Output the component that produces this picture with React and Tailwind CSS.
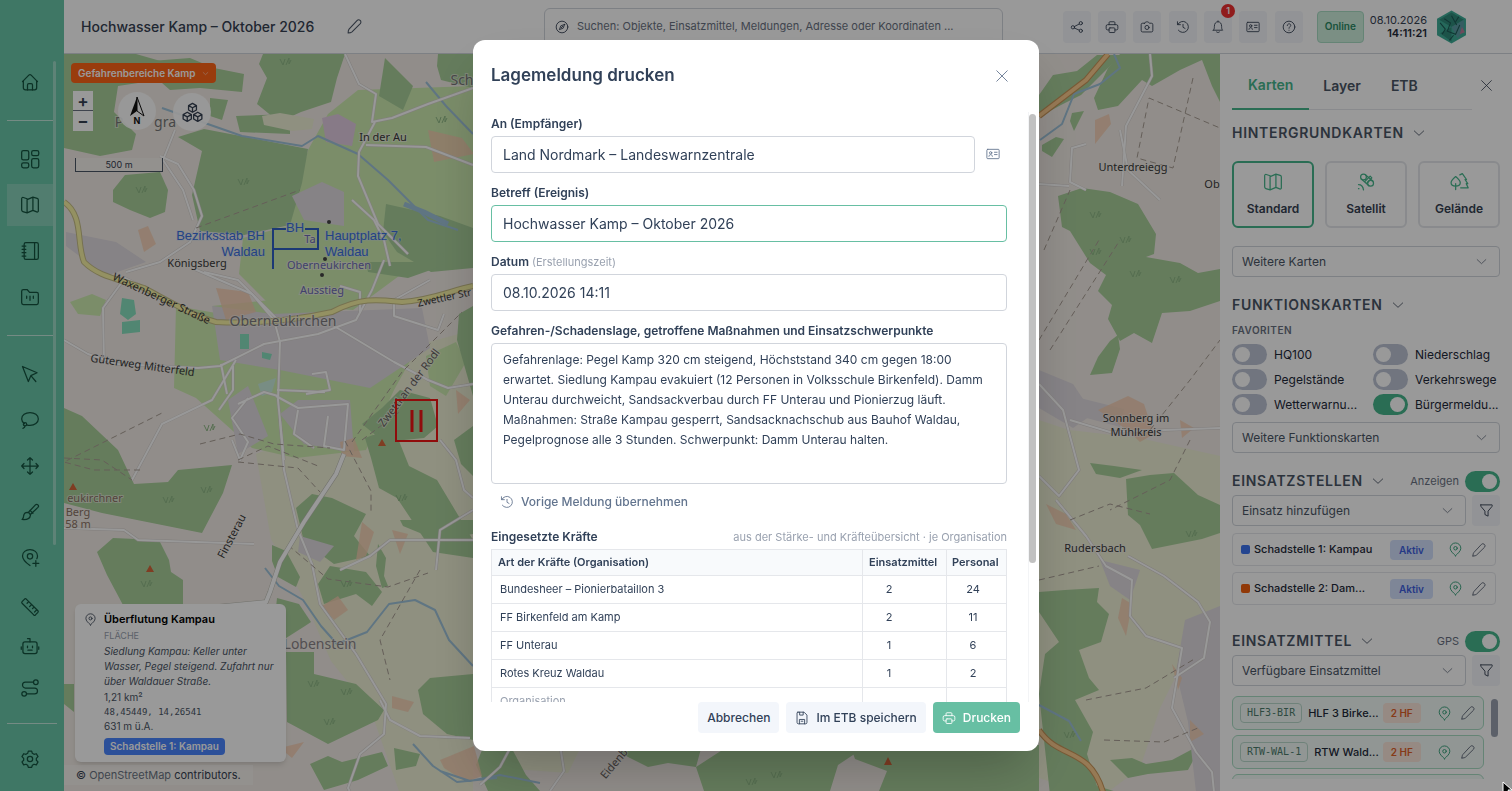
import { useState } from 'react';

const stroke = { fill: 'none', stroke: 'currentColor', strokeWidth: 1.5, strokeLinecap: 'round', strokeLinejoin: 'round' };

// 24er Raster, alle Icons sind reine Linien
const icons = {
  home: <><path d="M3 11.5 10.6 3.8a2 2 0 0 1 2.8 0L21 11.5" /><path d="M4 10.6V19a2.5 2.5 0 0 0 2.5 2.5h11A2.5 2.5 0 0 0 20 19v-8.4" /><path d="M9 21.5v-6A1.5 1.5 0 0 1 10.5 14h3a1.5 1.5 0 0 1 1.5 1.5v6" /></>,
  dashboard: <><rect x="2" y="2" width="8.5" height="11" rx="2" /><rect x="14" y="2" width="8.5" height="6" rx="2" /><rect x="2" y="16.5" width="8.5" height="6" rx="2" /><rect x="14" y="11.5" width="8.5" height="11" rx="2" /></>,
  map: <path d="M8.5 4.5 4 3c-1.2-.4-2 .3-2 1.5V18c0 1 .5 1.6 1.4 1.9l5.1 1.6 7-3 4.5 1.8c1.2.4 2-.3 2-1.500V6c0-1-.5-1.600-1.400-1.900l-5.100-1.600-7 3ZM8.500 4.800v16.400M15.500 2.800v15.500" />,
  notebook: <><rect x="5" y="2" width="17" height="20" rx="2" /><path d="M17.5 2v20M2.5 6H7M2.5 10H7M2.5 14H7M2.5 18H7" /></>,
  folder: <><path d="M2 19V5a2 2 0 0 1 2-2h4.5l3 3.500H20a2 2 0 0 1 2 2V19a2 2 0 0 1-2 2H4a2 2 0 0 1-2-2Z" /><path d="M8 11v2.500M12 11v5M16 11v2.500" /></>,
  cursor: <path d="m3 3 7 18 3-7 7.500-3.500L3 3Zm10 11 6 7" />,
  lasso: <><path d="M5.500 16.500C3.300 15 2 13 2 10.700 2 6.200 6.500 3 12 3s10 3.200 10 7.700-4.500 7.800-10 7.800c-1.500 0-2.900-.2-4.100-.7" /><circle cx="6" cy="17" r="2" /><path d="M6 19c0 1.500-.8 2.500-2.500 3" /></>,
  move: <path d="M12 2v20M2 12h20M9 4.800 12 2l3 2.800M9 19.200l3 2.800 3-2.800M4.800 9 2 12l2.800 3M19.200 9l2.800 3-2.800 3" />,
  brush: <><path d="M10 12.500 18.500 3.500a2 2 0 0 1 3 3L12.500 15" /><path d="M9 12.500c2 .3 3.400 1.600 3.500 3.500-.5 4-4.500 5.500-10 5 1.500-1 1.500-2 1.800-4 .3-2.500 2-4.500 4.700-4.500ZM12 10l3.500 3.500" /></>,
  pinPlus: <><path d="M12 21c-5-3.500-9-7-9-11.500C3 5 7 2 12 2s9 3 9 7.500c0 1.200-.3 2.300-.8 3.400" /><circle cx="12" cy="10" r="3.200" /><path d="M19 15v7M15.500 18.500h7" /></>,
  ruler: <path d="M7.500 2.500 21.500 16.500a1.500 1.500 0 0 1 0 2l-3 3a1.500 1.500 0 0 1-2 0L2.500 7.500a1.500 1.500 0 0 1 0-2l3-3a1.500 1.500 0 0 1 2 0ZM10.500 5.500 8.500 7.500M14 9l-2.500 2.500M17 12l-2 2M20 15.500l-2.500 2.500" />,
  bot: <><rect x="3.500" y="7" width="17" height="14" rx="2.500" /><path d="M12 7V3H9M1.500 13v3M22.500 13v3M9 12v2M15 12v2M9.500 17h5" /></>,
  route: <><circle cx="5" cy="19" r="2.800" /><circle cx="19" cy="5" r="2.800" /><path d="M16 5H6.500a3.500 3.500 0 0 0 0 7h11a3.500 3.500 0 0 1 0 7H8" /></>,
  gear: <><path d="m10 2.500-.8 2.700-2 1.200-2.800-.7-2 3.500 2 2v2.300l-2 2 2 3.500 2.800-.7 2 1.200.8 2.500h4l.8-2.500 2-1.200 2.800.7 2-3.500-2-2v-2.300l2-2-2-3.500-2.800.7-2-1.200-.8-2.700h-4Z" /><circle cx="12" cy="12" r="3.200" /></>,
  pencil: <path d="M3 21c0-2.500.3-4 1.300-5.200L15.500 3.700a3 3 0 0 1 4.700 4.300L8.500 19.500C7 20.700 5.500 21 3 21Z" />,
  share: <><circle cx="5" cy="12.500" r="2.800" /><circle cx="18.500" cy="5.500" r="2.800" /><circle cx="18.500" cy="18.500" r="2.800" /><path d="m7.500 11.200 8.500-4.400M7.500 13.800l8.500 3.700" /></>,
  printer: <><path d="M7 17H4.500A2.500 2.500 0 0 1 2 14.500v-4A2.500 2.500 0 0 1 4.500 8h15a2.500 2.500 0 0 1 2.500 2.500v4a2.500 2.500 0 0 1-2.500 2.500H17M7 8V4.500A1.500 1.500 0 0 1 8.500 3h7A1.500 1.500 0 0 1 17 4.500V8" /><rect x="7" y="13.500" width="10" height="8" rx="1.500" /></>,
  camera: <><path d="M8 5.500 9.200 4a2 2 0 0 1 1.600-.8h2.400a2 2 0 0 1 1.600.8L16 5.500h3.500A2.500 2.500 0 0 1 22 8v10a2.500 2.500 0 0 1-2.500 2.500h-15A2.500 2.500 0 0 1 2 18V8a2.500 2.500 0 0 1 2.500-2.500H8Z" /><circle cx="12" cy="12.800" r="3.500" /></>,
  history: <path d="M2.500 3v5h5M3 8a9.500 9.500 0 1 1 1 9.500M12 7.500v5l3.500 2" />,
  bell: <path d="M4 17.500c1.500-1.500 1.800-3 1.800-6.500 0-5 2.500-8 6.200-8s6.200 3 6.200 8c0 3.500.3 5 1.800 6.500H4ZM9.500 20.500c1.500 1.300 3.500 1.300 5 0M12 3V1.500" />,
  contact: <><rect x="1.500" y="4" width="21" height="16" rx="1.500" /><circle cx="8" cy="10" r="2" /><path d="M5 16c0-4 6-4 6 0M14.500 9h4.500M14.500 13h4.500" /></>,
  help: <><circle cx="12" cy="12" r="10" /><path d="M9 9.500c0-4 6-4 6-.3 0 2.300-3 2.300-3 5M12 17.500v.2" /></>,
  compass: <><circle cx="12" cy="12" r="10" /><path d="m16.500 7.500-2.500 6.500-6.500 2.500L10 10l6.500-2.500ZM10.500 13.500l3-3" /></>,
  satellite: <><circle cx="9" cy="6" r="3.500" /><circle cx="17.500" cy="13.500" r="3.500" /><path d="m6.500 8.500 9 8M11.500 3.500l9 7.500M10.500 11.500 17 5l2 2-6 6.500M3 15c3 0 5.500 2.500 6 6.500M3 20h.5" /></>,
  terrain: <><path d="M8 21v-7M8 17c-3.500 0-5.500-1.500-5.500-4S5 8 8 5.500c3 2.500 5.500 5 5.500 7.500S11.500 17 8 17ZM13 3.500 16 2l5 7h-1.800l3.300 5h-1.800L23 19h-9" /></>,
  chevron: <path d="m4 8.500 8 7.500 8-7.500" />,
  close: <path d="M3 3l18 18M21 3 3 21" />,
  filter: <path d="M3 3h18c.5 1.500 0 2.500-1 3.500L14.500 13v8l-5-2.500V13L4 6.500C3 5.500 2.500 4.500 3 3Z" />,
  pin: <><path d="M12 22c-4-4-8.500-7.500-8.500-12a8.500 8.500 0 0 1 17 0C20.500 14.500 16 18 12 22Z" /><circle cx="12" cy="10" r="2.800" /></>,
  save: <><path d="M5 2h10.500L20.500 7v12.500A2.500 2.500 0 0 1 18 22H6a2.500 2.500 0 0 1-2.500-2.500v-16A1.500 1.500 0 0 1 5 2Z" /><path d="M8 2v5h6V2M7.500 22v-7.500h9V22M10.500 17.500h3" /></>,
  cubes: <><path d="m12 1.500 4.500 2.600v5L12 11.700 7.500 9.100v-5L12 1.500ZM7.500 4.100 12 6.600l4.500-2.500M12 6.600v5" /><path d="m6 11.700 4.700 2.700v5L6 22.200l-4.700-2.800v-5L6 11.700ZM1.300 14.400 6 17l4.700-2.600M6 17v5" /><path d="m18 11.700 4.700 2.700v5L18 22.200l-4.700-2.800v-5l4.700-2.700ZM13.300 14.400 18 17l4.700-2.600M18 17v5" /></>,
};

function Icon({ name, className = 'size-5' }) {
  return <svg viewBox="0 0 24 24" aria-hidden="true" className={`shrink-0 ${className}`} {...stroke}>{icons[name]}</svg>;
}

const forests = [
  'M64 54h72l28 8-6 18-40 6-4 26 22 22-4 16-32 6-36-8Z',
  'M138 62l52-4 24 10 30 6-2 18-42-4-30 2Z',
  'M263 54h82l-8 24-6 24-30 10-22 10-22-18 10-26-8-14Z',
  'M438 54h35v34l-32-8-4-14Z',
  'M385 58l28 28-10 24-24-14Z',
  'M178 137l26-8 42 8 62 12-6 34-12 42-46 10-44-4-8-36 10-44Z',
  'M236 116l54-2 0 20-50-2Z',
  'M113 190l12-15 35-3 8 18-3 22-15 6-20-8-17-8Z',
  'M210 98l18 2-6 20-12-4Z',
  'M386 204l54 12 33 12v40l-42 4-34-20-14-20Z',
  'M366 262h60l18-10-2 14-34 12-40-6Z',
  'M64 408l18 8 36 34 16 34 34-2 10-12 54-5-9 28-21 40-100-20-38-10Z',
  'M362 424l20-16 18-18 30 8 8 28-14 12-40 4Z',
  'M365 438l16-6 16 4 12 30 28 14 36 60v18l-40-6-36-54-18-10-8-30Z',
  'M296 508l16-14 20 4 34 16-12 22 16 20-36 8-30-22Z',
  'M473 396v-90l-14 8-2 26Z',
  'M454 440l19-14v50l-12-12Z',
  'M400 520h73v14l-36 6-34-14Z',
  'M97 552l16-14 46 2 10 20 2 12 12 8v25h-60l-16-30Z',
  'M272 545l14 6 14 26-4 10-18-10-6-16Z',
  'M277 598l22 6 12 18-6 4-22 14-10-4Z',
  'M318 584l12-18 36 6 16 20-10 14-16-12-32 10Z',
  'M378 544l8 14-2 18 4 10-6 2-6-22Z',
  'M286 652h28v22l42 10 28 26-6 10-50 24-41-22Z',
  'M418 690l12-12 43-4v66l-26-6-24-20Z',
  'M310 764l18-8 14 6 40-10 6 14-30 14-34 10Z',
  'M394 748l26 6-4 12-20 4Z',
  'M64 684h10v28l-10-8Z',
  'M484 745h26l16 30 14 16h-52l-12-26Z',
  'M610 745h92l-6 22-28-4-20 4-20-10Z',
  'M696 767l34-22h138l-30 20-8 26h-126Z',
  'M850 745h189v46h-160l8-20-32-12Z',
  'M1039 95l14-20 24-4 20-16h24l-26 26-14 14-20 10-22 12Z',
  'M1120 54h100v48l-8-16-10-26-22 10-28 16-10-6-24 26-20 4-4-12 14-30Z',
  'M1072 113l12-2-10 20-4-10ZM1042 145l14-8 8 2-12 18-10-6Z',
  'M1058 196l24-8 28 4 28 12 18 30-2 20-8 3 34 6 18 10 22-4v32l-30 10-28 2-10 30-18-10-14 8-12-22 4-14-14-14 8-16-16-12-20-32-8-4Z',
  'M1110 341l8-6 2 14-8 24-22 2 8-18Z',
  'M1090 463l24 3 28 4-22 8-24-4Z',
  'M1126 479l24-4 24-2 24 22 22 10v28l-18 6-50 10-12-24-12-10Z',
  'M1065 590l34-2-2 14 12 12-8 28-22 8 10 28 10 12-24 10 18 32-6 22 10 32 20 6 12 12h-78l-12-110 6-40 14-12-20-30v-20Z',
  'M1110 760l22-2 14 6 26-4 30-16-14 26-40 4-20 4Z',
];

const meadows = [
  'M288 226l20-76 20-36 30-24 115-4v168l-74 22-46 34-84-6-30-30 4-36Z',
  'M176 306l80 14 60 4 70 4 30 22-22 40-28 60-70 8-44-10-56-50-22-10Z',
  'M70 302l22-8 14 6-6 16-22-2Z',
  'M426 356l30-14 10 20-20 34-16-10Z',
  'M212 306l58-6 70 2-8 18-90 6Z',
];

const farmland = [
  'M256 454l80-30 34-40 30-34 73-20v461h-74l-28-80-40-50-26-60-34-62Z',
  'M1039 420l30 10 70 8 81 18v172l-30 20-30 60-20 60-40 30-61-20Z',
  'M512 745h70l-14 28-54-4Z',
];

const roads = [
  'M345 54l14 30 17 10-4 28 20-4 36-14 45-16',
  'M375 122l-16 30-1 24 20 48 30 30',
  'M366 145l60 2 47 18',
  'M160 156l18 8 16 26 8 26-12 26-30 20-34 10',
  'M175 130l-12 30 20 30 10 30',
  'M64 340l24 14 30 10 80 4 22-2 44-22 54-10 38-14 16-30 12-30',
  'M104 364l-1-56 22-30 24 12',
  'M192 268l60 26 22 26 6 22-2 58 6 60',
  'M204 272l34 8 40 40M430 280l-36 20 0 16 44 14 6-16',
  'M334 326l60 36 34 18 20 8 25-4',
  'M233 366v24l-14 20M221 364l6 30M277 390l48 2M312 374l14-2 4 18-24 4M276 396l22 12 50-4-4 46-20-4 4-30M298 410l-4 24 20 14',
  'M248 398l-16 20 16 24-8 18-8-20M238 404l26-12 14 4',
  'M132 480l30-56 50-24 24-40',
  'M352 200l22 20 10 20 6 26M340 286l20 6 0 20',
  'M64 528l60 2 14 10 116 4',
  'M280 420l4 50 14 60 14 34 8 40 36 50 30 50-2 30-24 20-12 34 6 12 46-6',
  'M340 570l30-14 20-16h83M380 700l10 20 30 16 50 2M436 570l4-40 33-20',
  'M440 440l16 20 8 30 9 8',
  'M480 785l20-18 14-26M560 745l4 26-14 20',
  'M1150 54l2 22-26 50-4 60M1086 144l-14 4-2 34 16 8M1039 184l30 2',
  'M1120 130l8 40 32 30',
  'M1039 384l24 26 16 60-20 26-20-20M1070 420l40 12 110-4',
  'M1056 500l30 36 20 30 26 14-2 36 16 20 36 12-10 60 24 44 16 20 2 20',
  'M1128 556l36 20 34 26 12 20-6 36-30 20',
];

const tracks = [
  'M196 228l104-38M140 470l-46 0-30-8 40-20 60-30',
  'M200 444l40-10 34 10 56 4M238 460l30-14 50 20',
  'M238 462l60 6 22 24M352 442l50-70 60-60M345 441l26 50 0 20',
  'M362 440l40-30M288 545l40 34 60 8 40-14',
  'M64 458l38 2 30 20M420 570l-40 70 10 40',
  'M1044 250l26-60M1193 78l-20 90-36-10 12-60 71 30M1039 340l60-100M1050 350l70-110M1150 430l40-50 30-40M1039 580l60-14M1070 520l40-16 40 10',
  'M1086 700l60-12 50-30M1104 740l60 2 34-14M1190 440l-20 40-60 30',
];

const builtUp = [
  'M212 306l60 8 150-6 8 40-60 40-90-18-60-10Z', 'M298 400l52 0 4 52-50-8-24-30Z', 'M228 400l20-14 20 50-30 18Z',
  'M292 196l30-14 22 10v34l-40-6Z', 'M1039 370l34 14 20 30-20 14-34-20Z', 'M1068 395l56 14-4 18-52-14Z',
  'M66 232l50 10 30 20-40 14-40-30Z', 'M300 536l34 10-14 16-22-10Z', 'M1185 620l35-14v186h-24l-8-70-12-50Z', 'M1100 560l40 10-10 30-20-14Z',
];

const orange = [
  'M216 288l32 4 8 20-30 8ZM340 442l14-4 8 20-20-2ZM456 390l14 10-12 14ZM428 130l34 8 12 16-40 8ZM138 230l10-4 8 18-12 8Z',
  'M362 522l12 10-8 24-10 4ZM392 530l16 4-8 20ZM322 606l16-10 10 14-14 10ZM392 696l22 6-6 10-16-4ZM440 760l34-14 8 30-16 6-22-14ZM280 748l24-6-12 16Z',
  'M1095 120l14-6 2 10-16 20ZM1098 410l30-14 16 8 10 30-14 8-10-10ZM1180 420l14 8-12 10ZM1046 504l20 10 10 16-20-6ZM1122 598l10 6-6 32-8-18ZM1172 664l10 14-4 12ZM1190 720l14 14-14 8Z',
];

const trees = [
  [145, 584], [208, 428], [205, 490], [167, 500], [242, 182], [284, 62], [140, 190], [312, 684], [328, 722], [345, 692], [400, 498],
  [345, 584], [1094, 215], [1124, 240], [1094, 252], [1134, 274], [1174, 280], [1190, 534], [1068, 735], [775, 775], [750, 782], [440, 120],
];

const label = { fill: '#3a3a3a', stroke: '#f2efe9', strokeWidth: 2, strokeOpacity: 0.6, paintOrder: 'stroke', textAnchor: 'middle' };

const highway = 'M64 202c20 14 12 40 20 60 14 14 30 16 60 26 30 16 50 28 72 34 40 2 80-2 116-10 30-16 50-12 70-10 30-2 50-12 71-16';
const finsterau = 'M204 608l62-6 4-10 10-30 24-40 32-48 8-20';

function MapDrawing() {
  return (
    <svg viewBox="64 54 1156 737" preserveAspectRatio="xMinYMin slice" className="absolute inset-0 size-full font-['Noto_Sans',sans-serif]" role="img" aria-label="Karte Oberneukirchen">
      <rect x="64" y="54" width="1600" height="1000" fill="#f2ece6" />
      <g fill="#eef0d5">{farmland.map((d) => <path key={d} d={d} />)}</g>
      <g fill="#cdebb0">{meadows.map((d) => <path key={d} d={d} />)}</g>
      <g fill="#a8cf9a">{forests.map((d) => <path key={d} d={d} />)}</g>
      <path fill="#eef0d5" d="M262 116l18-3 34 6-2 10-20 2-28-6Z" />
      <g fill="#dfdae0">{builtUp.map((d) => <path key={d} d={d} />)}</g>
      <g fill="#f5cdb0" opacity="0.8">{orange.map((d) => <path key={d} d={d} />)}</g>
      <path fill="#e2cbe2" d="M322 118l16-4 18 10-4 22-26-4Z" />
      <path fill="#88e0be" d="M122 298l12 2 2 14-8 6-8-6ZM122 322l18-2 0 12-18 2ZM240 334l9 0v15h-9ZM262 352l10 2-2 6-8-2Z" />
      <path fill="#c9ecdc" d="M258 384l18-6-4 14-10 4Z" />

      {/* Gewässer */}
      <g fill="none" stroke="#9fc3da" strokeWidth="2" strokeLinejoin="round">
        <path d="M162 108l40 14 40 14 60 10 16-10 40 18 30 26 40 40 30 10" />
        <path strokeWidth="5" d="M404 204l20 8 24 12" />
        <path d="M426 82l20 24 27 28" />
        <path d="M265 568l14 18 24 14 18 26 16 18 30-12 22-28 26-4 20 10 14 30 24 26" />
        <path d="M413 744l20 22 24 16 40-4M440 771l30 10 30-6 40 8" />
        <path d="M1114 54l6 14-20 16-26 10-12 30-22 16M1039 705l30 16 12 20" />
      </g>

      {/* Straßen und Wege */}
      <g fill="none" strokeLinejoin="round">
        <g stroke="#d6d0ce" strokeWidth="3">{roads.map((d) => <path key={d} d={d} />)}</g>
        <g stroke="#fdfdfd" strokeWidth="2">{roads.map((d) => <path key={d} d={d} />)}</g>
        <g stroke="#a89d94" strokeWidth="1" strokeDasharray="6 4">{tracks.map((d) => <path key={d} d={d} />)}</g>
        <path stroke="#bdbdb4" strokeWidth="5" d={finsterau} />
        <path stroke="#fff" strokeWidth="4" d={finsterau} />
        <path stroke="#c5bd86" strokeWidth="6" d={highway} />
        <path stroke="#f7f2a4" strokeWidth="4" d={highway} />
        <path stroke="#c9965a" strokeWidth="6" d="M1108 54l-22 26-47 36M1039 730c20 30 50 16 64 62" />
        <path stroke="#fbcb8e" strokeWidth="4" d="M1108 54l-22 26-47 36M1039 730c20 30 50 16 64 62" />
      </g>
      <path fill="#d4663a" d="M146 572l4-7 4 7ZM378 446l4-7 4 7ZM69 490l4-7 4 7ZM884 765l4-8 4 8Z" />
      {/* Laubwald-Zeichen */}
      <g stroke="#8fb886" fill="none" strokeWidth="1">
        {trees.map(([x, y]) => (
          <path key={`${x}-${y}`} d={`M${x - 4} ${y - 3}l3 6 2-6M${x + 2} ${y + 3}l3-7v6l2-4`} />
        ))}
      </g>

      <g style={label} fontSize="11">
        <text x="119" y="127" fontSize="14" style={{ fill: '#777' }}>P</text>
        <text x="165" y="127" fontSize="14" style={{ fill: '#777' }}>gra</text>
        <text x="462" y="85" fontSize="14" style={{ fill: '#777' }}>Sch</text>
        <text x="383" y="141">In der Au</text>
        <text x="197" y="267">Königsberg</text>
        <text x="329" y="269" style={{ fill: '#6d6cb4' }}>Oberneukirchen</text>
        <text x="310" y="243" style={{ fill: '#6d6cb4' }}>Ta</text>
        <text x="322" y="294" style={{ fill: '#6d6cb4' }}>Ausstieg</text>
        <text x="283" y="326" fontSize="14" style={{ fill: '#7d7b80' }}>Oberneukirchen</text>
        <text transform="translate(160 302) rotate(25)" style={{ strokeOpacity: 0 }}>Waxenberger Straße</text>
        <text transform="translate(142 369) rotate(8)" style={{ strokeOpacity: 0 }}>Güterweg Mitterfeld</text>
        <text transform="translate(445 301) rotate(-12)" fontSize="10" style={{ strokeOpacity: 0 }}>Zwettler Str</text>
        <text transform="translate(235 538) rotate(-62)">Finsterau</text>
        <text transform="translate(412 390) rotate(-53)" style={{ fill: '#66615e' }}>Zwettl an der Rodl</text>
        <text transform="translate(617 766) rotate(-50)" style={{ fill: '#66615e' }}>Eidenb</text>
        <text x="95" y="502" fontSize="11" style={{ fill: '#8b7265' }}>eukirchner</text>
        <text x="78" y="516" style={{ fill: '#8b7265' }}>Berg</text>
        <text x="78" y="528" style={{ fill: '#8b7265' }}>58 m</text>
        <text x="320" y="649" fontSize="14" style={{ fill: '#8a8488' }}>Lobenstein</text>
        <text x="1133" y="171">Unterdreiegg</text>
        <text x="1212" y="188">Ob</text>
        <text x="1136" y="422">Sonnberg im</text>
        <text x="1136" y="436">Mühlkreis</text>
        <text x="1095" y="552">Rudersbach</text>
      </g>
      <circle cx="329" cy="222" r="2" fill="#444" /><circle cx="325" cy="259" r="2" fill="#444" /><circle cx="322" cy="275" r="2" fill="#444" />

      {/* Taktische Zeichen */}
      <path d="M286 229h-13v40M305 229h13v20h-45" fill="none" stroke="#2f5fc4" strokeWidth="2" />
      <g fill="#3b6fe0" fontSize="13" className="font-['Liberation_Sans',sans-serif]" stroke="#cfe0ee" strokeOpacity="0.4" strokeWidth="2" paintOrder="stroke">
        <text x="295" y="232" textAnchor="middle">BH</text>
        <text x="265" y="240" textAnchor="end">Bezirksstab BH</text>
        <text x="265" y="256" textAnchor="end">Waldau</text>
        <text x="325" y="240">Hauptplatz 7,</text>
        <text x="325" y="256">Waldau</text>
      </g>
      <g fill="none" stroke="#f01414" strokeWidth="3">
        <rect x="396" y="400" width="41" height="41" strokeWidth="2" />
        <path d="M412 410v22M421 410v22" />
      </g>
    </svg>
  );
}

function SideButton({ icon, title, active, tall }) {
  return (
    <button type="button" aria-label={title} className={`flex w-[46px] shrink-0 items-center justify-center text-[#14533f] ${tall ? 'h-12' : 'h-[42px]'} ${active ? 'bg-white/20' : ''}`}>
      <Icon name={icon} />
    </button>
  );
}

function Sidebar() {
  return (
    <nav aria-label="Hauptmenü" className="flex w-16 shrink-0 flex-col bg-[#69c6a9] pt-[61px] pb-[11px] pl-[7px]">
      <div className="relative flex min-h-0 flex-1 flex-col gap-1 overflow-hidden">
        <SideButton icon="home" title="Start" />
        <hr className="my-[13px] w-[46px] shrink-0 border-white/60" />
        <SideButton icon="dashboard" title="Übersicht" />
        <SideButton icon="map" title="Karte" active />
        <SideButton icon="notebook" title="Einsatztagebuch" />
        <SideButton icon="folder" title="Akten" />
        <hr className="my-[13px] w-[46px] shrink-0 border-white/60" />
        <SideButton icon="cursor" title="Auswählen" />
        <SideButton icon="lasso" title="Lasso" />
        <SideButton icon="move" title="Verschieben" />
        <SideButton icon="brush" title="Zeichnen" />
        <SideButton icon="pinPlus" title="Marker setzen" />
        <SideButton icon="ruler" title="Messen" tall />
        <div className="absolute top-0 left-[46px] h-[484px] w-[3px] rounded bg-white/35" />
      </div>
      <div className="flex flex-col">
        <SideButton icon="bot" title="Assistent" />
        <SideButton icon="route" title="Route" />
        <hr className="my-[14px] w-[50px] border-white/60" />
        <SideButton icon="gear" title="Einstellungen" />
      </div>
    </nav>
  );
}

const headerTools = [
  ['share', 'Teilen'], ['printer', 'Drucken'], ['camera', 'Foto'], ['history', 'Verlauf'],
  ['bell', 'Benachrichtigungen'], ['contact', 'Kontakte'], ['help', 'Hilfe'],
];

function Header() {
  return (
    <header className="flex h-[54px] shrink-0 items-center border-b border-gray-300 bg-white pr-[45px] pl-[17px]">
      <div className="flex w-[463px] items-center gap-8">
        <h1 className="text-sm font-medium text-gray-700">Hochwasser Kamp – Oktober 2026</h1>
        <button type="button" aria-label="Titel bearbeiten" className="text-gray-600"><Icon name="pencil" className="size-[17px]" /></button>
      </div>
      <label className="flex h-[38px] max-w-[459px] flex-1 items-center gap-2 rounded-md border border-gray-300 px-[10px] text-gray-700">
        <Icon name="compass" className="size-[14px]" />
        <input type="search" aria-label="Suche" placeholder="Suchen: Objekte, Einsatzmittel, Meldungen, Adresse oder Koordinaten ..." className="w-full text-[11px] outline-none placeholder:text-gray-500" />
      </label>
      <div className="ml-auto flex items-center">
        <div className="flex w-60 justify-between">
          {headerTools.map(([icon, title]) => (
            <button key={icon} type="button" aria-label={title} className="relative flex h-8 w-7 items-center justify-center rounded bg-[#f3f5fa] text-gray-700">
              <Icon name={icon} className="size-[14px]" />
              {icon === 'bell' && <span className="absolute -top-[7px] -right-[3px] flex size-[14px] items-center justify-center rounded-full bg-[#f03030] text-[9px] font-semibold text-white">1</span>}
            </button>
          ))}
        </div>
        <span className="ml-[14px] flex h-8 items-center rounded border border-[#a9dcc4] bg-[#cdeedd] px-[7px] text-[10px] font-semibold text-[#2b8a63]">Online</span>
        <div className="mr-[9px] ml-[6px] text-right text-[11px] leading-[13px] text-gray-700">
          <div>08.10.2026</div>
          <div className="font-semibold text-gray-800">14:11:21</div>
        </div>
        <svg viewBox="0 0 30 32" className="h-[34px] w-[31px]" role="img" aria-label="Profil">
          <path d="M15 0 29 8v16L15 32 1 24V8Z" fill="#3fae98" />
          <path d="M15 2 27 9 15 16 3 9ZM4 22l11-6v14Z" fill="#2f8a7b" />
          <path d="M15 16 27 9v10l-6 8Z" fill="#5a9ba3" />
          <path d="M8 8l6 4-3 8 8 3 4-9M15 5l5 9M4 12l5 6-3 5M22 6l-3 5M17 24l-4 5" stroke="#1d5a56" strokeWidth="1" fill="none" />
          <path d="M25 16l3 5-5 2Z" fill="#b97d99" />
        </svg>
      </div>
    </header>
  );
}

function MapArea() {
  return (
    <main className="relative min-w-0 flex-1 overflow-hidden bg-[#f2ece6]">
      <MapDrawing />
      <button type="button" className="absolute top-[9px] left-[7px] flex h-5 items-center gap-[6px] rounded bg-[#ff6417] px-[7px] text-[10px] font-semibold text-white">
        Gefahrenbereiche Kamp <Icon name="chevron" className="size-[7px]" />
      </button>
      <div className="absolute top-[37px] left-[9px] flex w-5 flex-col divide-y divide-gray-500 bg-white text-[17px] font-semibold text-gray-700">
        <button type="button" aria-label="Vergrößern" className="h-5 leading-5">+</button>
        <button type="button" aria-label="Verkleinern" className="h-5 leading-5">−</button>
      </div>
      <button type="button" aria-label="Norden" className="absolute top-[38px] left-[54px] size-[38px] rounded-full bg-white/90">
        <svg viewBox="0 0 38 38" className="size-full">
          <path d="M19 5 12 24l7-5Z" fill="#111" />
          <path d="M19 5l7 19-7-5Z" fill="none" stroke="#111" />
          <text x="19" y="32" textAnchor="middle" fontSize="9" fontWeight="700" fill="#111" className="font-['Inter',sans-serif]">N</text>
        </svg>
      </button>
      <button type="button" aria-label="3D-Ansicht" className="absolute top-[39px] left-[109px] flex size-[38px] items-center justify-center rounded-full bg-white/90 text-gray-700">
        <Icon name="cubes" className="size-[21px]" />
      </button>
      <div className="absolute top-[104px] left-[11px] h-[14px] w-[88px] border border-t-0 border-gray-600 bg-white/30 text-center text-[9px] leading-[13px] text-gray-700">500 m</div>

      <article className="absolute bottom-[29px] left-[11px] flex w-[211px] gap-[7px] rounded-md bg-white pt-2 pr-3 pb-[7px] pl-[9px] text-[10px] text-gray-600 shadow-md">
        <Icon name="pin" className="mt-[1px] size-[13px] text-gray-700" />
        <div>
          <h2 className="text-[11px] leading-[15px] font-semibold text-black">Überflutung Kampau</h2>
          <p className="text-[9px] leading-[17px] text-gray-400">FLÄCHE</p>
          <p className="leading-[15px] whitespace-nowrap italic">Siedlung Kampau: Keller unter<br />Wasser, Pegel steigend. Zufahrt nur<br />über Waldauer Straße.</p>
          <p className="leading-4">1,21 km²</p>
          <p className="font-['DejaVu_Sans_Mono',monospace] text-[9px] leading-[14px]">48,45449, 14,26541</p>
          <p className="leading-[15px]">631 m ü.A.</p>
          <span className="mt-1 inline-block rounded bg-[#4a86ff] px-[6px] text-[10px] leading-[17px] font-semibold text-white">Schadstelle 1: Kampau</span>
        </div>
      </article>
      <p className="absolute bottom-[6px] left-0 bg-white/30 px-3 text-[11px] leading-5 text-gray-700">© <a href="#osm" className="text-gray-500">OpenStreetMap</a> contributors.</p>
    </main>
  );
}

function Toggle({ label: name, on, small }) {
  const [checked, setChecked] = useState(!!on);
  return (
    <label className={`flex min-w-0 items-center whitespace-nowrap ${small ? 'flex-row-reverse gap-[6px] text-[11px] text-gray-500' : 'gap-[7px] text-xs text-gray-800'}`}>
      <input type="checkbox" role="switch" checked={checked} onChange={() => setChecked(!checked)} className="peer sr-only" />
      <span className="flex h-[21px] w-[35px] shrink-0 items-center rounded-full bg-[#bcc3d4] px-[3px] peer-checked:justify-end peer-checked:bg-[#46b68c]">
        <span className="size-[15px] rounded-full bg-white" />
      </span>
      <span>{name}</span>
    </label>
  );
}

function SectionTitle({ children, side }) {
  return (
    <div className="flex h-[22px] items-center justify-between">
      <h2 className="flex items-center gap-2 text-sm font-semibold tracking-wider text-gray-600">{children} <Icon name="chevron" className="size-[14px]" /></h2>
      {side}
    </div>
  );
}

function PanelSelect({ label: name }) {
  return (
    <div className="relative min-w-0 flex-1">
      <select aria-label={name} className="h-[31px] w-full appearance-none rounded border border-gray-300 px-[9px] text-xs text-gray-600">
        <option>{name}</option>
      </select>
      <Icon name="chevron" className="pointer-events-none absolute top-[9px] right-3 size-[13px] text-gray-500" />
    </div>
  );
}

function FilterButton() {
  return <button type="button" aria-label="Filtern" className="flex h-[31px] w-7 items-center justify-center rounded bg-[#f3f5fa] text-gray-700"><Icon name="filter" className="size-[15px]" /></button>;
}

function RowActions() {
  return (
    <>
      <button type="button" aria-label="Auf Karte zeigen" className="ml-auto text-[#35a07a]"><Icon name="pin" className="size-[15px]" /></button>
      <button type="button" aria-label="Bearbeiten" className="ml-2 text-gray-500"><Icon name="pencil" className="size-4" /></button>
    </>
  );
}

const sites = [
  { name: 'Schadstelle 1: Kampau', color: 'bg-[#3d74f0]' },
  { name: 'Schadstelle 2: Dam...', color: 'bg-[#f2600e]' },
];
const units = [['HLF3-BIR', 'HLF 3 Birke...'], ['RTW-WAL-1', 'RTW Wald...']];

function Panel() {
  return (
    <aside className="flex w-[292px] shrink-0 flex-col overflow-hidden bg-white px-3 pt-3">
      <div className="flex items-start justify-between pr-[7px]">
        <div role="tablist" className="flex w-60 border-b border-gray-200 text-sm leading-5 font-semibold text-gray-600">
          <button type="button" role="tab" aria-selected="true" className="-mb-px border-b-2 border-[#46b68c] px-4 pt-[9px] pb-[13px] text-[#46b68c]">Karten</button>
          <button type="button" role="tab" aria-selected="false" className="px-[14px] pt-[9px] pb-[13px]">Layer</button>
          <button type="button" role="tab" aria-selected="false" className="px-4 pt-[9px] pb-[13px]">ETB</button>
        </div>
        <button type="button" aria-label="Panel schließen" className="mt-[13px] text-gray-700"><Icon name="close" className="size-[13px]" /></button>
      </div>

      <section className="mt-3">
        <SectionTitle>HINTERGRUNDKARTEN</SectionTitle>
        <div className="mt-[17px] grid grid-cols-3 gap-[11px]">
          {[['map', 'Standard'], ['satellite', 'Satellit'], ['terrain', 'Gelände']].map(([icon, name], i) => (
            <button key={name} type="button" className={`flex h-[67px] flex-col items-center justify-center gap-[9px] rounded-md border-2 text-xs font-semibold text-gray-700 ${i === 0 ? 'border-[#46b68c]' : 'border-gray-200'}`}>
              <Icon name={icon} className="size-5 text-[#46b68c]" />{name}
            </button>
          ))}
        </div>
        <div className="mt-[18px] flex"><PanelSelect label="Weitere Karten" /></div>
      </section>

      <section className="mt-[17px]">
        <SectionTitle>FUNKTIONSKARTEN</SectionTitle>
        <h3 className="mt-[6px] text-[10px] leading-4 font-semibold tracking-wider text-gray-500">FAVORITEN</h3>
        <div className="mt-[6px] grid grid-cols-2 gap-x-[14px] gap-y-1">
          <Toggle label="HQ100" /><Toggle label="Niederschlag" />
          <Toggle label="Pegelstände" /><Toggle label="Verkehrswege" />
          <Toggle label="Wetterwarnu..." /><Toggle label="Bürgermeldu..." on />
        </div>
        <div className="mt-[7px] flex"><PanelSelect label="Weitere Funktionskarten" /></div>
      </section>

      <section className="mt-[17px]">
        <SectionTitle side={<Toggle label="Anzeigen" on small />}>EINSATZSTELLEN</SectionTitle>
        <div className="mt-[3px] flex gap-[6px]"><PanelSelect label="Einsatz hinzufügen" /><FilterButton /></div>
        <ul className="mt-[7px] flex flex-col gap-[6px] pr-1">
          {sites.map((s) => (
            <li key={s.name} className="flex h-[33px] items-center rounded border border-gray-200 px-2">
              <span className={`mr-1 size-[9px] rounded-[2px] ${s.color}`} />
              <span className="w-[136px] text-[11px] font-medium text-gray-800">{s.name}</span>
              <span className="rounded bg-[#d3dffc] px-[9px] text-[10px] leading-5 font-semibold text-[#3f5fe0]">Aktiv</span>
              <RowActions />
            </li>
          ))}
        </ul>
      </section>

      <section className="mt-[25px] flex min-h-0 flex-1 flex-col">
        <SectionTitle side={<Toggle label="GPS" on small />}>EINSATZMITTEL</SectionTitle>
        <div className="mt-[3px] flex gap-[6px]"><PanelSelect label="Verfügbare Einsatzmittel" /><FilterButton /></div>
        <div className="mt-[10px] mb-3 flex min-h-0 flex-1 gap-[7px] overflow-hidden">
          <ul className="flex flex-1 flex-col gap-[5px]">
            {units.map(([code, name]) => (
              <li key={code} className="flex h-[34px] shrink-0 items-center rounded-md border border-[#a9dcc4] bg-[#f2fbf7] px-[7px]">
                <span className="mr-[6px] rounded border border-[#b9d9cc] px-[6px] font-['DejaVu_Sans_Mono',monospace] text-[10px] leading-[18px] text-[#4d7c6c]">{code}</span>
                <span className="text-[11px] font-medium text-gray-800">{name}</span>
                <span className="ml-1 rounded bg-[#fbe6da] px-2 text-[10px] leading-5 font-semibold text-[#e0622a]">2 HF</span>
                <RowActions />
              </li>
            ))}
            <li className="h-[34px] shrink-0 rounded-md border border-[#a9dcc4] bg-[#f2fbf7]" />
          </ul>
          <div className="mt-[3px] mr-[2px] h-[38px] w-[7px] rounded bg-gray-400" />
        </div>
      </section>
    </aside>
  );
}

const forces = [
  ['Bundesheer – Pionierbataillon 3', 2, 24],
  ['FF Birkenfeld am Kamp', 2, 11],
  ['FF Unterau', 1, 6],
  ['Rotes Kreuz Waldau', 1, 2],
  ['', '', ''],
];

const report = 'Gefahrenlage: Pegel Kamp 320 cm steigend, Höchststand 340 cm gegen 18:00 erwartet. Siedlung Kampau evakuiert (12 Personen in Volksschule Birkenfeld). Damm Unterau durchweicht, Sandsackverbau durch FF Unterau und Pionierzug läuft.\nMaßnahmen: Straße Kampau gesperrt, Sandsacknachschub aus Bauhof Waldau, Pegelprognose alle 3 Stunden. Schwerpunkt: Damm Unterau halten.';

const inputClass = 'h-[37px] w-full rounded border px-[11px] text-sm text-slate-700 outline-none';
const labelClass = 'mb-[2px] block text-xs leading-5 font-semibold text-slate-700';

function PrintDialog() {
  return (
    <div role="dialog" aria-modal="true" aria-labelledby="print-title" className="flex h-[90vh] w-[566px] flex-col rounded-xl bg-white pb-[18px] shadow-2xl">
      <div className="flex h-[72px] shrink-0 items-center justify-between pr-[30px] pl-[18px]">
        <h2 id="print-title" className="text-[17px] font-semibold text-slate-700">Lagemeldung drucken</h2>
        <button type="button" aria-label="Schließen" className="text-slate-500"><Icon name="close" className="size-[14px]" /></button>
      </div>

      <div className="flex min-h-0 flex-1 overflow-hidden">
        <div className="flex flex-1 flex-col gap-[10px] pt-[2px] pr-[21px] pl-[18px]">
          <div>
            <label htmlFor="to" className={labelClass}>An (Empfänger)</label>
            <div className="flex items-center gap-[11px]">
              <input id="to" defaultValue="Land Nordmark – Landeswarnzentrale" className={`${inputClass} border-gray-300`} />
              <button type="button" aria-label="Kontakt wählen" className="mr-[7px] text-slate-500"><Icon name="contact" className="size-[14px]" /></button>
            </div>
          </div>
          <div>
            <label htmlFor="subject" className={labelClass}>Betreff (Ereignis)</label>
            <input id="subject" defaultValue="Hochwasser Kamp – Oktober 2026" className={`${inputClass} border-[#67bfa3]`} />
          </div>
          <div>
            <label htmlFor="date" className={labelClass}>Datum <span className="text-[11px] font-normal text-gray-400">(Erstellungszeit)</span></label>
            <input id="date" defaultValue="08.10.2026 14:11" className={`${inputClass} border-gray-300`} />
          </div>
          <div>
            <label htmlFor="report" className={labelClass}>Gefahren-/Schadenslage, getroffene Maßnahmen und Einsatzschwerpunkte</label>
            <textarea id="report" defaultValue={report} className="block h-[141px] w-full resize-none rounded border border-gray-300 px-[11px] py-[6px] text-xs leading-5 text-slate-700 outline-none" />
            <button type="button" className="mt-2 ml-[9px] flex items-center gap-[7px] text-xs leading-5 font-medium text-slate-500"><Icon name="history" className="size-[14px]" /> Vorige Meldung übernehmen</button>
          </div>
          <div className="mt-[5px]">
            <div className="flex items-center justify-between">
              <h3 className={labelClass}>Eingesetzte Kräfte</h3>
              <span className="text-[11px] text-gray-400">aus der Stärke- und Kräfteübersicht · je Organisation</span>
            </div>
            <table className="w-full table-fixed border-collapse text-[11px] text-slate-700">
              <thead>
                <tr className="h-[26px] bg-slate-50 text-left">
                  <th className="border border-gray-200 px-[6px] font-semibold">Art der Kräfte (Organisation)</th>
                  <th className="w-[84px] border border-gray-200 px-[6px] font-semibold">Einsatzmittel</th>
                  <th className="w-[60px] border border-gray-200 px-[5px] font-semibold">Personal</th>
                </tr>
              </thead>
              <tbody>
                {forces.map(([org, vehicles, staff], i) => (
                  <tr key={i}>
                    <td className="border border-gray-200 p-0"><input aria-label="Organisation" placeholder="Organisation" defaultValue={org} className="block h-[27px] w-full px-2 placeholder:text-gray-400" /></td>
                    <td className="border border-gray-200 p-0"><input aria-label="Einsatzmittel" defaultValue={vehicles} className="block h-[27px] w-[52px] text-center" /></td>
                    <td className="border border-gray-200 p-0"><input aria-label="Personal" defaultValue={staff} className="block h-[27px] w-[52px] text-center" /></td>
                  </tr>
                ))}
              </tbody>
            </table>
          </div>
        </div>
        <div className="w-[11px] shrink-0 border-l border-gray-100 pt-[2px]">
          <div className="h-[449px] w-[7px] rounded bg-[#c1c1c1]" />
        </div>
      </div>

      <div className="flex shrink-0 justify-end gap-[7px] pr-[19px] text-xs font-medium text-slate-700">
        <button type="button" className="h-[31px] rounded bg-[#f3f6fb] px-[9px]">Abbrechen</button>
        <button type="button" className="flex h-[31px] items-center gap-[7px] rounded bg-[#f3f6fb] px-[9px]"><Icon name="save" className="size-[14px]" /> Im ETB speichern</button>
        <button type="button" className="flex h-[31px] items-center gap-[7px] rounded bg-[#67bfa3] px-[9px] text-white"><Icon name="printer" className="size-[14px]" /> Drucken</button>
      </div>
    </div>
  );
}

export default function App() {
  return (
    <div className="flex h-screen overflow-hidden bg-white font-['Inter',sans-serif]">
      <Sidebar />
      <div className="flex min-w-0 flex-1 flex-col">
        <Header />
        <div className="flex min-h-0 flex-1">
          <MapArea />
          <Panel />
        </div>
      </div>
      <div className="fixed inset-0 flex items-center justify-center bg-black/40">
        <PrintDialog />
      </div>
      <svg viewBox="0 0 10 15" className="pointer-events-none fixed right-0 bottom-0 h-[10px] w-[10px]" preserveAspectRatio="xMinYMin slice" aria-hidden="true">
        <path d="M1 1v12l3-3 2 4 2-1-2-4h4Z" fill="#000" stroke="#fff" />
      </svg>
    </div>
  );
}
